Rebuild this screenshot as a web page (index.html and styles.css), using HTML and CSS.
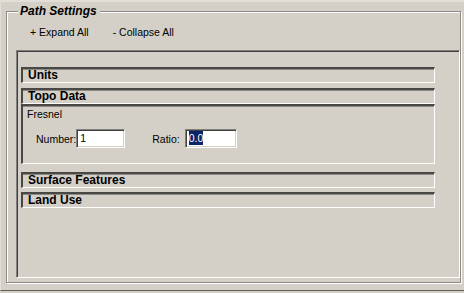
FILE: index.html
```html
<!DOCTYPE html>
<html>
<head>
<meta charset="utf-8">
<link rel="stylesheet" href="styles.css">
</head>
<body>
<div class="window">
  <div class="group">
    <div class="legend">Path Settings</div>
    <div class="toolbar">
      <span class="tool">+ Expand All</span>
      <span class="tool">- Collapse All</span>
    </div>
    <div class="panel">
      <div class="bar bar-units">Units</div>
      <div class="bar bar-topo">Topo Data</div>
      <div class="box">
        <div class="box-title">Fresnel</div>
        <div class="fields">
          <span class="label label-number">Number:</span>
          <span class="input input-number">1</span>
          <span class="label label-ratio">Ratio:</span>
          <span class="input input-ratio"><span class="sel">0.0</span></span>
        </div>
      </div>
      <div class="bar bar-surface">Surface Features</div>
      <div class="bar bar-land">Land Use</div>
    </div>
  </div>
</div>
</body>
</html>
```
FILE: styles.css
```css
html, body {
  margin: 0;
  padding: 0;
  background: #d4d0c8;
  font-family: "Liberation Sans", Arial, sans-serif;
  color: #000;
}
.window {
  width: 464px;
  height: 291px;
  box-sizing: border-box;
  padding-top: 11px;
  border-bottom: 1px solid #5f5d59;
  border-top: 2px solid #e2dfd8;
  border-left: 1px solid #e2dfd8;
}
.group {
  position: relative;
  margin-left: 5px;
  margin-top: -2px;
  width: 455px;
  height: 272px;
  box-sizing: border-box;
  border: 1px solid #8c8a85;
  box-shadow: inset 1px 1px 0 #ffffff, 1px 1px 0 #ffffff;
  padding: 14px 0 4px 9px;
  display: flex;
  flex-direction: column;
}
.legend {
  position: absolute;
  left: 11px;
  top: -8px;
  padding: 0 3px 0 2px;
  background: #d4d0c8;
  font-weight: bold;
  font-style: italic;
  font-size: 12px;
  line-height: 14px;
}
.toolbar {
  display: flex;
  gap: 24px;
  padding-left: 14px;
  height: 24px;
  font-size: 10.5px;
  line-height: 12px;
}
.panel {
  flex: 1;
  box-sizing: border-box;
  border-top: 1px solid #808080;
  border-left: 1px solid #808080;
  border-right: 1px solid #ffffff;
  border-bottom: 1px solid #ffffff;
  box-shadow: inset 1px 1px 0 #404040;
  padding: 16px 24px 0 4px;
  display: flex;
  flex-direction: column;
}
.bar, .box {
  box-sizing: border-box;
  border-top: 2px solid #4a4845;
  border-left: 2px solid #4a4845;
  border-right: 1px solid #ffffff;
  border-bottom: 1px solid #ffffff;
  box-shadow: inset 0 1px 0 #8c8a85;
}
.bar {
  height: 16px;
  font-weight: bold;
  font-size: 12px;
  line-height: 13px;
  padding-left: 5px;
}
.bar-topo { margin-top: 5px; }
.box {
  height: 60px;
  padding-left: 4px;
  font-size: 10.5px;
}
.box-title {
  line-height: 13px;
  margin-top: 2px;
}
.fields {
  display: flex;
  align-items: center;
  margin-top: 8px;
  padding-left: 9px;
}
.label { line-height: 12px; }
.label-ratio { margin-left: 27px; }
.input {
  box-sizing: border-box;
  height: 19px;
  background: #fff;
  border-top: 1px solid #808080;
  border-left: 1px solid #808080;
  border-right: 1px solid #ffffff;
  border-bottom: 1px solid #ffffff;
  box-shadow: inset 1px 1px 0 #404040, inset -1px -1px 0 #d4d0c8;
  padding-left: 3px;
  font-size: 10.5px;
  line-height: 17px;
}
.input-number { width: 49px; }
.input-ratio { width: 52px; margin-left: 5px; }
.sel {
  background: #0a246a;
  color: #fff;
  padding: 1px 0;
}
.bar-surface { margin-top: 8px; }
.bar-land { margin-top: 4px; }
```
